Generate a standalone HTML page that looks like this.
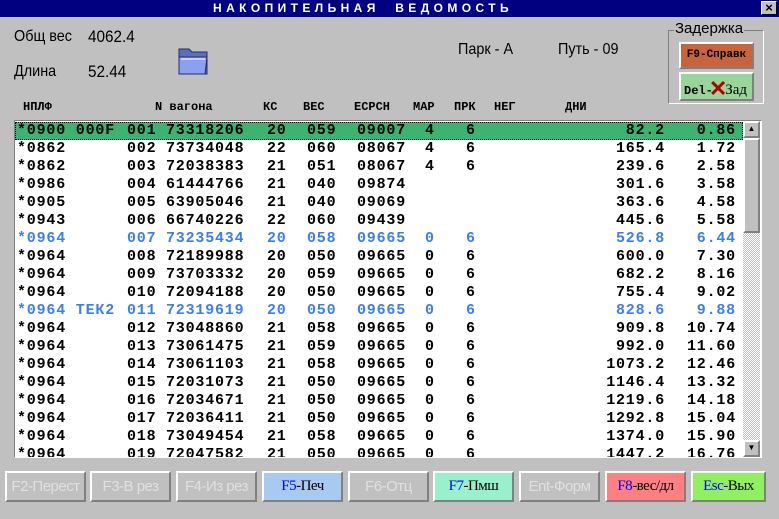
<!DOCTYPE html>
<html><head><meta charset="utf-8"><style>
*{margin:0;padding:0;box-sizing:border-box}
body{width:779px;height:519px;background:#c0c0c0;position:relative;overflow:hidden;font-family:"Liberation Sans",sans-serif}
.ab{position:absolute;white-space:pre}
#title{position:absolute;left:0;top:0;width:779px;height:17px;background:#000080;color:#fff;font:bold 12px "Liberation Sans",sans-serif;letter-spacing:4.4px;line-height:16px;padding-left:213px;white-space:pre}
#x{position:absolute;right:2px;top:1px;width:16px;height:14px;background:#c0c0c0;border:1px solid;border-color:#fff #000 #000 #fff;color:#000;font:bold 13px "Liberation Sans";line-height:11px;text-align:center;letter-spacing:0;padding:0}
.lbl{font-size:16px;color:#000;transform:scaleX(.9);transform-origin:left}
.hd{font:bold 12px "Liberation Mono",monospace;top:100px}
#tbl{position:absolute;left:14px;top:120px;width:748px;height:338px;background:#fff;border:1px solid;border-color:#808080 #fff #fff #808080;overflow:hidden}
.r{position:absolute;left:0;width:728px;height:18px;font:bold 15px "Liberation Mono",monospace;letter-spacing:0.8px;line-height:18px;color:#000}
.r span{position:absolute;top:0}
.b{color:#3a7ff0}
.a{left:2px}.n{left:112px}.w{left:151px}.k{left:252px}.v{left:292px}.e{left:342px}.m{left:410px}.p{left:451px}
.d{right:78px}.q{right:7px}
.btn{position:absolute;top:471px;height:31px;border:2px solid;border-color:#fff #808080 #808080 #fff;font:15px "Liberation Sans",sans-serif;text-align:center;line-height:27px;color:#e0e0e0;letter-spacing:-0.5px}
.btn.ac{font-family:"Liberation Serif",serif;color:#000}
.btn i{font-style:normal;color:#0000ff}
</style></head><body>
<div id="title">НАКОПИТЕЛЬНАЯ  ВЕДОМОСТЬ<div id="x">×</div></div>
<div class="ab lbl" style="left:14px;top:28px">Общ вес</div>
<div class="ab lbl" style="left:88px;top:27px;font-size:17px">4062.4</div>
<div class="ab lbl" style="left:14px;top:63px">Длина</div>
<div class="ab lbl" style="left:88px;top:62px;font-size:17px">52.44</div>
<svg class="ab" style="left:176px;top:45px" width="36" height="32" viewBox="0 0 36 32">
<path d="M3 4h10l3 3h15v22H3z" fill="#5a6fc0" stroke="#20306a"/>
<path d="M3 12h28l-2 17H3z" fill="#8aa0f0" stroke="#20306a"/>
<path d="M5 14h24" stroke="#c8d4ff" stroke-width="2"/>
</svg>
<div class="ab lbl" style="left:458px;top:41px">Парк - А</div>
<div class="ab lbl" style="left:558px;top:41px">Путь - 09</div>
<div class="ab" style="left:668px;top:30px;width:96px;height:74px;border:1px solid;border-color:#808080 #fff #fff #808080"></div>
<div class="ab" style="left:674px;top:20px;background:#c0c0c0;font-size:15px;padding:0 1px">Задержка</div>
<div class="ab" style="left:679px;top:42px;width:75px;height:27px;background:#c8643c;border:2px solid;border-color:#fff #808080 #808080 #fff;font:bold 11px 'Liberation Mono',monospace;text-align:center;line-height:23px">F9-Справк</div>
<div class="ab" style="left:679px;top:72px;width:75px;height:29px;background:#99d49b;border:2px solid;border-color:#fff #808080 #808080 #fff;font:bold 12px 'Liberation Mono',monospace;line-height:25px;padding-left:3px">Del-<span style="color:#b00000;font:bold 22px 'Liberation Sans';position:relative;top:2px;margin:0 -2px 0 -4px">✕</span><span style="font-family:'Liberation Serif';font-size:15px;font-weight:normal">Зад</span></div>
<div class="ab hd" style="left:23px">НПЛФ</div>
<div class="ab hd" style="left:155px">N вагона</div>
<div class="ab hd" style="left:263px">КС</div>
<div class="ab hd" style="left:303px">ВЕС</div>
<div class="ab hd" style="left:354px">ЕСРСН</div>
<div class="ab hd" style="left:413px">МАР</div>
<div class="ab hd" style="left:454px">ПРК</div>
<div class="ab hd" style="left:494px">НЕГ</div>
<div class="ab hd" style="left:565px">ДНИ</div>
<div id="tbl">
<div class="r" style="top:1px;background:#3cb371;outline:1px dotted #000;outline-offset:-1px"><span class="a">*0900 000F</span><span class="n">001</span><span class="w">73318206</span><span class="k">20</span><span class="v">059</span><span class="e">09007</span><span class="m">4</span><span class="p">6</span><span class="d">82.2</span><span class="q">0.86</span></div>
<div class="r" style="top:19px"><span class="a">*0862</span><span class="n">002</span><span class="w">73734048</span><span class="k">22</span><span class="v">060</span><span class="e">08067</span><span class="m">4</span><span class="p">6</span><span class="d">165.4</span><span class="q">1.72</span></div>
<div class="r" style="top:37px"><span class="a">*0862</span><span class="n">003</span><span class="w">72038383</span><span class="k">21</span><span class="v">051</span><span class="e">08067</span><span class="m">4</span><span class="p">6</span><span class="d">239.6</span><span class="q">2.58</span></div>
<div class="r" style="top:55px"><span class="a">*0986</span><span class="n">004</span><span class="w">61444766</span><span class="k">21</span><span class="v">040</span><span class="e">09874</span><span class="d">301.6</span><span class="q">3.58</span></div>
<div class="r" style="top:73px"><span class="a">*0905</span><span class="n">005</span><span class="w">63905046</span><span class="k">21</span><span class="v">040</span><span class="e">09069</span><span class="d">363.6</span><span class="q">4.58</span></div>
<div class="r" style="top:91px"><span class="a">*0943</span><span class="n">006</span><span class="w">66740226</span><span class="k">22</span><span class="v">060</span><span class="e">09439</span><span class="d">445.6</span><span class="q">5.58</span></div>
<div class="r b" style="top:109px"><span class="a">*0964</span><span class="n">007</span><span class="w">73235434</span><span class="k">20</span><span class="v">058</span><span class="e">09665</span><span class="m">0</span><span class="p">6</span><span class="d">526.8</span><span class="q">6.44</span></div>
<div class="r" style="top:127px"><span class="a">*0964</span><span class="n">008</span><span class="w">72189988</span><span class="k">20</span><span class="v">050</span><span class="e">09665</span><span class="m">0</span><span class="p">6</span><span class="d">600.0</span><span class="q">7.30</span></div>
<div class="r" style="top:145px"><span class="a">*0964</span><span class="n">009</span><span class="w">73703332</span><span class="k">20</span><span class="v">059</span><span class="e">09665</span><span class="m">0</span><span class="p">6</span><span class="d">682.2</span><span class="q">8.16</span></div>
<div class="r" style="top:163px"><span class="a">*0964</span><span class="n">010</span><span class="w">72094188</span><span class="k">20</span><span class="v">050</span><span class="e">09665</span><span class="m">0</span><span class="p">6</span><span class="d">755.4</span><span class="q">9.02</span></div>
<div class="r b" style="top:181px"><span class="a">*0964 ТЕК2</span><span class="n">011</span><span class="w">72319619</span><span class="k">20</span><span class="v">050</span><span class="e">09665</span><span class="m">0</span><span class="p">6</span><span class="d">828.6</span><span class="q">9.88</span></div>
<div class="r" style="top:199px"><span class="a">*0964</span><span class="n">012</span><span class="w">73048860</span><span class="k">21</span><span class="v">058</span><span class="e">09665</span><span class="m">0</span><span class="p">6</span><span class="d">909.8</span><span class="q">10.74</span></div>
<div class="r" style="top:217px"><span class="a">*0964</span><span class="n">013</span><span class="w">73061475</span><span class="k">21</span><span class="v">059</span><span class="e">09665</span><span class="m">0</span><span class="p">6</span><span class="d">992.0</span><span class="q">11.60</span></div>
<div class="r" style="top:235px"><span class="a">*0964</span><span class="n">014</span><span class="w">73061103</span><span class="k">21</span><span class="v">058</span><span class="e">09665</span><span class="m">0</span><span class="p">6</span><span class="d">1073.2</span><span class="q">12.46</span></div>
<div class="r" style="top:253px"><span class="a">*0964</span><span class="n">015</span><span class="w">72031073</span><span class="k">21</span><span class="v">050</span><span class="e">09665</span><span class="m">0</span><span class="p">6</span><span class="d">1146.4</span><span class="q">13.32</span></div>
<div class="r" style="top:271px"><span class="a">*0964</span><span class="n">016</span><span class="w">72034671</span><span class="k">21</span><span class="v">050</span><span class="e">09665</span><span class="m">0</span><span class="p">6</span><span class="d">1219.6</span><span class="q">14.18</span></div>
<div class="r" style="top:289px"><span class="a">*0964</span><span class="n">017</span><span class="w">72036411</span><span class="k">21</span><span class="v">050</span><span class="e">09665</span><span class="m">0</span><span class="p">6</span><span class="d">1292.8</span><span class="q">15.04</span></div>
<div class="r" style="top:307px"><span class="a">*0964</span><span class="n">018</span><span class="w">73049454</span><span class="k">21</span><span class="v">058</span><span class="e">09665</span><span class="m">0</span><span class="p">6</span><span class="d">1374.0</span><span class="q">15.90</span></div>
<div class="r" style="top:325px"><span class="a">*0964</span><span class="n">019</span><span class="w">72047582</span><span class="k">21</span><span class="v">050</span><span class="e">09665</span><span class="m">0</span><span class="p">6</span><span class="d">1447.2</span><span class="q">16.76</span></div>
<div style="position:absolute;left:728px;top:0;width:17px;height:336px;background:repeating-conic-gradient(#c0c0c0 0 25%,#fff 0 50%) 0 0/2px 2px"></div>
<div style="position:absolute;left:728px;top:0;width:17px;height:17px;background:#c0c0c0;border:2px solid;border-color:#fff #808080 #808080 #fff;font-size:8px;text-align:center;line-height:12px">▲</div>
<div style="position:absolute;left:728px;top:17px;width:17px;height:95px;background:#c0c0c0;border:2px solid;border-color:#fff #808080 #808080 #fff"></div>
<div style="position:absolute;left:728px;top:319px;width:17px;height:17px;background:#c0c0c0;border:2px solid;border-color:#fff #808080 #808080 #fff;font-size:8px;text-align:center;line-height:12px">▼</div>
</div>
<div class="btn" style="left:5px;width:81px;background:#c0c0c0">F2-Перест</div>
<div class="btn" style="left:90px;width:81px;background:#c0c0c0">F3-В рез</div>
<div class="btn" style="left:176px;width:81px;background:#c0c0c0">F4-Из рез</div>
<div class="btn ac" style="left:262px;width:81px;background:#a6caf0"><i>F5</i>-Печ</div>
<div class="btn" style="left:348px;width:81px;background:#c0c0c0">F6-Отц</div>
<div class="btn ac" style="left:433px;width:81px;background:#99f0cc"><i>F7</i>-Пмш</div>
<div class="btn" style="left:519px;width:81px;background:#c0c0c0">Ent-Форм</div>
<div class="btn ac" style="left:605px;width:81px;background:#ff8080"><i>F8</i>-вес/дл</div>
<div class="btn ac" style="left:691px;width:75px;background:#90f060"><i>Esc</i>-Вых</div>
</body></html>
